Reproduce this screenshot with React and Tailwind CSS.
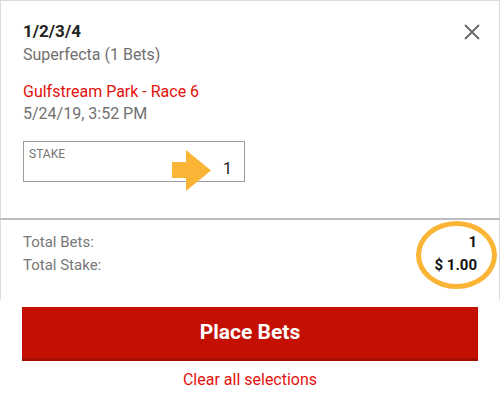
export default function App() {
  return (
    <div className="w-[500px] h-[405px] bg-white font-['Roboto',sans-serif] relative overflow-hidden">
      {/* Bet slip card */}
      <div className="border-t border-x border-[#dcdcdc] h-[300px] flex flex-col">
        <div className="relative px-[22px] pt-[19px]">
          <div className="text-[17px] leading-[23px] font-bold text-[#222]">1/2/3/4</div>
          <div className="text-[16px] leading-[23px] text-[#707070]">Superfecta (1 Bets)</div>
          <div className="mt-[15px] text-[16px] leading-[22px] text-[#e3120b]">Gulfstream Park - Race 6</div>
          <div className="text-[16px] leading-[22px] text-[#707070]">5/24/19, 3:52 PM</div>

          <button className="absolute right-[19px] top-[23px] text-[#666]" aria-label="close">
            <svg width="16" height="16" viewBox="0 0 16 16" fill="none" stroke="currentColor" strokeWidth="1.8">
              <path d="M1 1L15 15M15 1L1 15" />
            </svg>
          </button>

          {/* Stake input */}
          <div className="relative mt-[16px] w-[222px] h-[41px] border-[1.5px] border-[#9e9e9e] px-[5px] pt-[5px]">
            <div className="text-[12px] leading-[14px] text-[#757575]">STAKE</div>
            <div className="absolute right-[12px] top-[18px] text-[16px] leading-[18px] text-[#222]">1</div>
            <svg className="absolute left-[148px] top-[8px]" width="40" height="41" viewBox="0 0 40 41">
              <path d="M0 12H14V0L39 20.5L14 41V28H0Z" fill="#fbb536" />
            </svg>
          </div>
        </div>

        <div className="mt-[36px] h-[2px] bg-[#bdbdbd] -mx-px"></div>

        <div className="px-[22px] pt-[11px] flex justify-between text-[15px] leading-[23px]">
          <div className="text-[#777]">
            <div>Total Bets:</div>
            <div>Total Stake:</div>
          </div>
          <div className="text-right font-bold text-[#111]">
            <div>1</div>
            <div>$ 1.00</div>
          </div>
        </div>
      </div>

      {/* Highlight ring */}
      <div className="absolute left-[416px] top-[221px] w-[81px] h-[68px] rounded-[50%] border-[5px] border-[#fbb536]"></div>

      {/* Actions */}
      <div className="px-[22px] pt-[7px]">
        <button className="w-full h-[54px] bg-[#c41002] border-b-[3px] border-[#a50d02] text-white text-[21px] font-bold">
          Place Bets
        </button>
        <div className="mt-[9px] text-center text-[16px] leading-[20px] text-[#e3120b]">Clear all selections</div>
      </div>
    </div>
  );
}
